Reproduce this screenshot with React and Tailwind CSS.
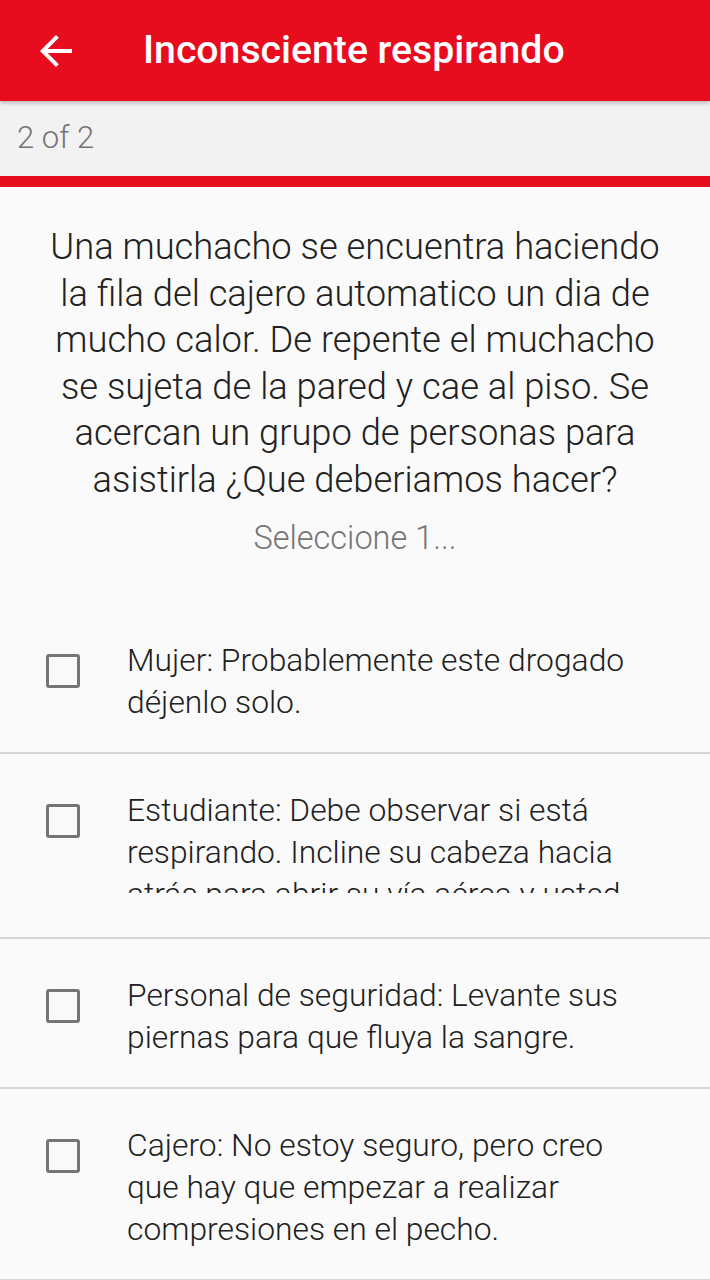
const options = [
  { text: 'Mujer: Probablemente este drogado déjenlo solo.' },
  {
    text: 'Estudiante: Debe observar si está respirando. Incline su cabeza hacia atrás para abrir su vía aérea y usted debe pedir ayuda a emergencias.',
    clip: true,
  },
  { text: 'Personal de seguridad: Levante sus piernas para que fluya la sangre.' },
  { text: 'Cajero: No estoy seguro, pero creo que hay que empezar a realizar compresiones en el pecho.' },
]

function Checkbox() {
  return <div className="mt-[15px] h-[34px] w-[34px] shrink-0 rounded-[3px] border-[3px] border-[#757575]" />
}

function OptionRow({ text, clip }) {
  return (
    <div className={'flex border-b-2 border-[#d6d6d6] pl-[46px] pr-[68px] pt-[35px] ' + (clip ? 'pb-[44px]' : 'pb-[29px]')}>
      <Checkbox />
      <div
        className={
          'ml-[47px] text-[31.8px] font-light leading-[42px] text-[#212121] ' + (clip ? 'h-[104px] overflow-hidden' : '')
        }
      >
        {text}
      </div>
    </div>
  )
}

export default function App() {
  return (
    <div className="min-h-[1280px] w-full bg-[#fafafa] font-['Roboto',sans-serif]">
      <div className="relative z-10 flex h-[101px] items-center bg-[#e80c1f] shadow-[0_2px_4px_rgba(0,0,0,0.25)]">
        <svg className="ml-[32px] h-[48px] w-[48px]" viewBox="0 0 24 24" fill="#ffffff">
          <path d="M20 11H7.83l5.59-5.59L12 4l-8 8 8 8 1.41-1.41L7.83 13H20v-2z" />
        </svg>
        <div className="ml-[63px] text-[39.2px] font-medium text-white">Inconsciente respirando</div>
      </div>
      <div className="flex h-[75px] items-center bg-[#f2f2f2] pl-[17px] text-[31px] font-light text-[#757575]">2 of 2</div>
      <div className="h-[11px] bg-[#e80c1f]" />
      <div className="px-[42px] pt-[37px] text-center text-[36.3px] font-light leading-[46.5px] text-[#212121]">
        Una muchacho se encuentra haciendo la fila del cajero automatico un dia de mucho calor. De repente el muchacho
        se sujeta de la pared y cae al piso. Se acercan un grupo de personas para asistirla ¿Que deberiamos hacer?
      </div>
      <div className="mt-[17px] text-center text-[32.5px] font-light leading-[36px] text-[#757575]">Seleccione 1...</div>
      <div className="mt-[48px]">
        {options.map((o, i) => (
          <OptionRow key={i} text={o.text} clip={o.clip} />
        ))}
      </div>
    </div>
  )
}
